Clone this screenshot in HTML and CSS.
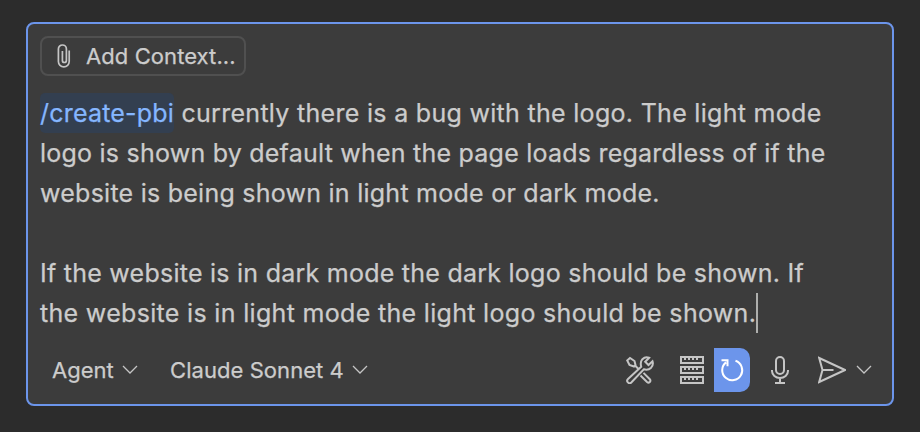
FILE: index.html
```html
<!DOCTYPE html>
<html lang="en">
<head>
<meta charset="utf-8">
<title>Chat input</title>
<link rel="stylesheet" href="styles.css">
</head>
<body>
<main class="composer">
  <button class="context">
    <svg class="clip" viewBox="0 0 16 26"><path d="M13.200 7.500V18.500a5.400 5.400 0 0 1-10.800 0V6a4 4 0 0 1 8 0V17.500a2 2 0 0 1-4 0V8"/></svg>
    <span class="context-label">Add Context...</span>
  </button>
  <div class="prompt">
    <div class="line l1"><span class="command">/create-pbi</span> <span class="rest">currently there is a bug with the logo. The light mode</span></div>
    <div class="line l2">logo is shown by default when the page loads regardless of if the</div>
    <div class="line l3">website is being shown in light mode or dark mode.</div>
    <div class="line"></div>
    <div class="line l5">If the website is in dark mode the dark logo should be shown. If</div>
    <div class="line l6">the website is in light mode the light logo should be shown.<span class="caret"></span></div>
  </div>
  <footer class="toolbar">
    <button class="picker agent"><span>Agent</span><svg class="chevron" viewBox="0 0 16 10"><path d="M1 1l7 7 7-7"/></svg></button>
    <button class="picker model"><span>Claude Sonnet 4</span><svg class="chevron" viewBox="0 0 16 10"><path d="M1 1l7 7 7-7"/></svg></button>
    <div class="actions">
      <svg class="tools" viewBox="0 0 28 28"><path d="M15.200 10.800L2 23a2.300 2.300 0 0 0 3.300 3.500L17.800 13.300q4.500 1.200 7.300-1.600 2.600-3 1.400-6.400L22.500 9l-3.300-3.300 3.900-3.900q-3.800-1.500-6.700 1.400-2.500 3-1.200 7.600zM1.200 4.500L4 2l4.500 3 1 4-1.500 1.500-4.500-1.500zM9.500 10l2.500 2.500M14.500 19.500l6.500 6.500q1.500 1.200 2.800 0 1.200-1.300 0-2.800l-6.300-6.300"/></svg>
      <svg class="server" viewBox="0 0 24 28"><g class="server-case"><rect x="1" y="1" width="22" height="6"/><rect x="1" y="11" width="22" height="6"/><rect x="1" y="21" width="22" height="6"/></g><path d="M5 2v2m4-2v2m4-2v2m4-2v2M5 12v2m4-2v2m4-2v2m4-2v2M5 22v2m4-2v2m4-2v2m4-2v2"/></svg>
      <button class="refresh"><svg viewBox="0 0 36 44"><path d="M21.500 12.800a10 10 0 1 1-9.500 1.600M7.500 12.200h6v6"/></svg></button>
      <svg class="mic" viewBox="0 0 18 28"><rect x="5" y="1" width="8" height="17" rx="4"/><path d="M1 14v1a8 7 0 0 0 16 0v-1M9 22v5M4 27h10"/></svg>
      <svg class="send" viewBox="0 0 28 28"><path d="M1.200 2L27 14 1.200 26 4.500 14zM4.500 14h11"/></svg>
      <svg class="chevron" viewBox="0 0 16 10"><path d="M1 1l7 7 7-7"/></svg>
    </div>
  </footer>
</main>
</body>
</html>
```
FILE: styles.css
```css
* { box-sizing: border-box; }
body {
  margin: 0;
  height: 432px;
  padding: 22px 26px 26px;
  background: #2c2c2c;
  color: #cccccc;
  font-family: Inter, "Liberation Sans", sans-serif;
  font-weight: 440;
  -webkit-text-stroke: 0.25px currentColor;
}
button { margin: 0; padding: 0; border: 0; background: none; color: inherit; font: inherit; }
svg { display: block; flex: none; fill: none; stroke: #c5c5c5; stroke-width: 2; }
.composer {
  height: 384px;
  padding: 12px;
  border: 2px solid #6c95eb;
  border-radius: 8px;
  background: #3c3c3c;
  display: flex;
  flex-direction: column;
}
.context {
  width: 206px;
  height: 40px;
  padding-left: 14px;
  border: 2px solid #505050;
  border-radius: 8px;
  display: flex;
  align-items: center;
  font-size: 22px;
  letter-spacing: 0.08px;
  white-space: nowrap;
}
.clip { width: 16px; height: 26px; margin-right: 14px; stroke-width: 1.7; }
.prompt { margin-top: 17px; }
.line { height: 40px; line-height: 40px; font-size: 25px; white-space: nowrap; letter-spacing: 0.25px; }
.l1 { letter-spacing: 0.3px; }
.l2 { letter-spacing: 0.23px; }
.l6 { letter-spacing: 0.32px; }
.command { display: inline-block; background: #333f50; color: #85b6ff; border-radius: 5px; letter-spacing: 0.2px; }
.caret { display: inline-block; width: 2px; height: 40px; background: #aeafad; vertical-align: top; }
.toolbar { margin-top: 14px; height: 44px; display: flex; align-items: center; padding: 0 8px 0 12px; font-size: 22px; margin-top: 15px; }
.picker { display: flex; align-items: center; white-space: nowrap; }
.model { letter-spacing: 0.06px; }
.chevron { width: 16px; height: 10px; stroke-width: 1.3; }
.picker .chevron { margin-left: 8px; }
.agent { width: 118px; }
.actions { margin-left: auto; display: flex; align-items: center; }
.tools { width: 28px; height: 28px; margin-right: 26px; }
.server { width: 24px; height: 28px; margin-right: 10px; }
.refresh { width: 36px; height: 44px; background: #6c95eb; border-radius: 0 10px 10px 0; margin-right: 21px; }
.refresh svg { width: 36px; height: 44px; stroke: #fff; }
.mic { width: 18px; height: 28px; margin-right: 29px; }
.send { width: 28px; height: 28px; margin-right: 10px; }
```
